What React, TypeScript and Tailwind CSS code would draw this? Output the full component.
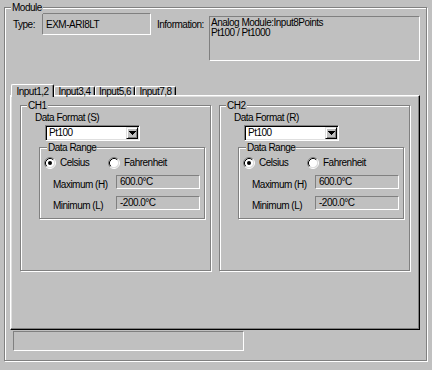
const sunken =
  "border border-t-[#808080] border-l-[#808080] border-b-white border-r-white";

function GroupBox({
  label,
  className,
  labelClass,
  children,
}: {
  label: string;
  className: string;
  labelClass: string;
  children?: React.ReactNode;
}) {
  return (
    <div
      className={`relative border border-[#808080] shadow-[inset_1px_1px_0_#fff,1px_1px_0_#fff] ${className}`}
    >
      <span
        className={`absolute -top-[7px] px-[1px] bg-[#c0c0c0] leading-[13px] ${labelClass}`}
      >
        {label}
      </span>
      {children}
    </div>
  );
}

function Radio({ checked }: { checked?: boolean }) {
  return (
    <svg width="12" height="12" viewBox="0 0 12 12" className="shrink-0">
      <circle cx="6" cy="6" r="4.5" fill="#fff" />
      <path d="M2.11 9.89 A5.5 5.5 0 0 1 9.89 2.11" fill="none" stroke="#808080" />
      <path d="M9.89 2.11 A5.5 5.5 0 0 1 2.11 9.89" fill="none" stroke="#fff" />
      <path d="M2.82 9.18 A4.5 4.5 0 0 1 9.18 2.82" fill="none" stroke="#000" />
      <path d="M9.18 2.82 A4.5 4.5 0 0 1 2.82 9.18" fill="none" stroke="#dfdfdf" />
      {checked && <circle cx="6" cy="6" r="2" fill="#000" />}
    </svg>
  );
}

function Combo({ value }: { value: string }) {
  return (
    <div
      className={`ml-[24px] mt-[1px] flex w-[95px] h-[16px] bg-white ${sunken} shadow-[inset_1px_1px_0_#000,inset_-1px_-1px_0_#dfdfdf]`}
    >
      <div className="flex-1 flex items-center pl-[3px] leading-[12px]">{value}</div>
      <div className="m-[1px] w-[12px] h-[12px] flex items-center justify-center bg-[#c0c0c0] border border-t-[#dfdfdf] border-l-[#dfdfdf] border-b-black border-r-black shadow-[inset_1px_1px_0_#fff,inset_-1px_-1px_0_#808080]">
        <svg width="7" height="4" viewBox="0 0 7 4" shapeRendering="crispEdges">
          <rect x="0" y="0" width="7" height="1" fill="#000" />
          <rect x="1" y="1" width="5" height="1" fill="#000" />
          <rect x="2" y="2" width="3" height="1" fill="#000" />
          <rect x="3" y="3" width="1" height="1" fill="#000" />
        </svg>
      </div>
    </div>
  );
}

function RangeRow({ label, value, className }: { label: string; value: string; className: string }) {
  return (
    <div className={`flex items-start ${className}`}>
      <div className="ml-[13px] w-[63px] pt-[3px] leading-[13px]">{label}</div>
      <div className={`w-[84px] h-[14px] flex items-center pl-[3px] leading-[12px] ${sunken}`}>
        {value}
      </div>
    </div>
  );
}

function Channel({ title, fmt }: { title: string; fmt: string }) {
  return (
    <GroupBox label={title} className="w-[191px] h-[166px]" labelClass="left-[6px]">
      <div className="ml-[14px] mt-[5px] leading-[13px]">Data Format ({fmt})</div>
      <Combo value="Pt100" />
      <GroupBox
        label="Data Range"
        className="ml-[18px] mt-[6px] w-[166px] h-[72px]"
        labelClass="left-[7px]"
      >
        <div className="flex items-center ml-[4px] mt-[8px] h-[13px]">
          <div className="flex items-center gap-[4px] w-[64px]">
            <Radio checked />
            <span className="leading-[13px]">Celsius</span>
          </div>
          <div className="flex items-center gap-[4px]">
            <Radio />
            <span className="leading-[13px]">Fahrenheit</span>
          </div>
        </div>
        <RangeRow label="Maximum (H)" value="600.0°C" className="mt-[6px]" />
        <RangeRow label="Minimum (L)" value="-200.0°C" className="mt-[5px]" />
      </GroupBox>
    </GroupBox>
  );
}

const tabs = ["Input1,2", "Input3,4", "Input5,6", "Input7,8"];
const tabWidths = ["w-[43px]", "w-[41px]", "w-[40px]", "w-[41px]"];

export default function App() {
  return (
    <div className="w-[432px] h-[370px] bg-[#c0c0c0] pt-[7px] pl-[4px] text-[10px] tracking-[-0.5px] text-black font-[family-name:'Liberation_Sans',sans-serif]">
      <GroupBox label="Module" className="w-[423px] h-[354px]" labelClass="left-[6px]">
        <div className="flex items-start pt-[5px]">
          <div className="ml-[8px] mt-[5px] w-[29px] leading-[13px]">Type:</div>
          <div className={`w-[109px] h-[22px] flex items-center pl-[3px] leading-[13px] ${sunken}`}>
            EXM-ARI8LT
          </div>
          <div className="ml-[6px] mt-[5px] w-[52px] leading-[13px]">Information:</div>
          <div className={`mt-[3px] w-[211px] h-[45px] pl-[1px] pt-[1px] leading-[10px] ${sunken}`}>
            <div>Analog Module:Input8Points</div>
            <div>Pt100 / Pt1000</div>
          </div>
        </div>

        <div className="mt-[23px] ml-[6px] flex items-start h-[11px]">
          {tabs.map((t, i) =>
            i === 0 ? (
              <div
                key={t}
                className={`${tabWidths[i]} relative z-10 h-[13px] flex items-center justify-center leading-[11px] bg-[#c0c0c0] border-l border-t border-white border-r border-r-black rounded-t-[2px] shadow-[inset_-1px_0_0_#808080]`}
              >
                {t}
              </div>
            ) : (
              <div
                key={t}
                className={`${tabWidths[i]} mt-[2px] h-[9px] flex items-center justify-center leading-[11px] border-l border-t border-white border-r border-r-black rounded-t-[2px] shadow-[inset_-1px_0_0_#808080]`}
              >
                {t}
              </div>
            )
          )}
        </div>

        <div className="ml-[5px] w-[410px] h-[235px] border border-t-white border-l-white border-b-black border-r-black shadow-[inset_-1px_-1px_0_#808080,inset_1px_1px_0_#dfdfdf]">
          <div className="flex gap-[8px] pl-[9px] pt-[9px]">
            <Channel title="CH1" fmt="S" />
            <Channel title="CH2" fmt="R" />
          </div>
        </div>

        <div className={`ml-[8px] mt-[1px] w-[231px] h-[20px] ${sunken}`} />
      </GroupBox>
    </div>
  );
}
